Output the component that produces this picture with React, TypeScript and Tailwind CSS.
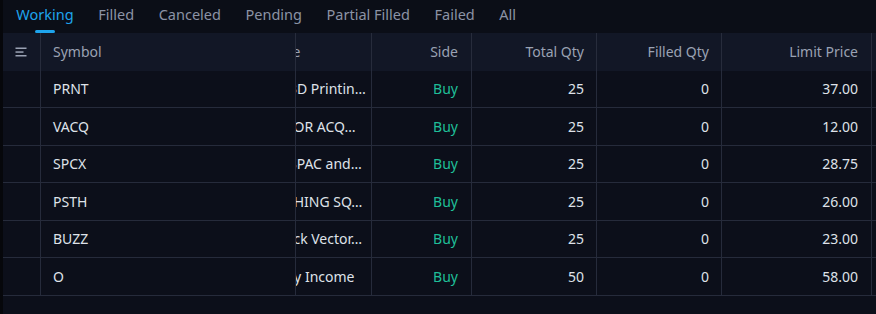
import React from "react";

const TABS = ["Working", "Filled", "Canceled", "Pending", "Partial Filled", "Failed", "All"];

// names are already cut the way the grid shows them
const ORDERS = [
  { symbol: "PRNT", name: "The 3D Printin…", side: "Buy", total: 25, filled: 0, price: "37.00" },
  { symbol: "VACQ", name: "VECTOR ACQ…", side: "Buy", total: 25, filled: 0, price: "12.00" },
  { symbol: "SPCX", name: "The SPAC and…", side: "Buy", total: 25, filled: 0, price: "28.75" },
  { symbol: "PSTH", name: "PERSHING SQ…", side: "Buy", total: 25, filled: 0, price: "26.00" },
  { symbol: "BUZZ", name: "VanEck Vector…", side: "Buy", total: 25, filled: 0, price: "23.00" },
  { symbol: "O", name: "Realty Income", side: "Buy", total: 50, filled: 0, price: "58.00" },
];

function ListIcon() {
  return (
    <svg width="12" height="10" viewBox="0 0 12 10" fill="none">
      <rect x="0.5" y="0.5" width="11" height="1.5" fill="#9aa2b3" />
      <rect x="0.5" y="4.3" width="8" height="1.5" fill="#9aa2b3" />
      <rect x="0.5" y="8" width="11" height="1.5" fill="#9aa2b3" />
    </svg>
  );
}

export default function App() {
  return (
    <div className="flex h-[314px] w-[876px] overflow-hidden bg-[#0c0f1a] font-['Noto_Sans',sans-serif] text-[14px]">
      <div className="w-[3px] shrink-0 bg-[#06070b]" />
      <div className="flex flex-1 flex-col overflow-hidden">
        {/* Tabs */}
        <div className="flex h-[33px] shrink-0 items-stretch bg-[#0b0e17] pl-px">
          {TABS.map((tab, i) => (
            <div key={tab} className="relative flex items-center px-[12.3px] pb-[4px] text-[14.5px]">
              <span className={i === 0 ? "text-[#1ea4ec]" : "text-[#8b93a5]"}>{tab}</span>
              {i === 0 && (
                <div className="absolute bottom-0 left-1/2 h-[3px] w-[20px] -translate-x-1/2 rounded-sm bg-[#1ea4ec]" />
              )}
            </div>
          ))}
        </div>

        {/* Header */}
        <div className="flex h-[37.5px] shrink-0 bg-[#121726] text-[#9aa2b3]">
          <div className="flex w-[38px] shrink-0 items-center justify-center border-r border-[#272c3c] pr-px">
            <ListIcon />
          </div>
          <div className="flex w-[255px] shrink-0 items-center border-r border-[#272c3c] pl-3">Symbol</div>
          <div className="flex w-[76px] shrink-0 items-center overflow-hidden border-r border-[#272c3c]">
            <div className="ml-[-47px] w-[123px] shrink-0 whitespace-nowrap pl-3">Name</div>
          </div>
          <div className="flex w-[100px] shrink-0 items-center justify-end border-r border-[#272c3c] pr-[13px]">Side</div>
          <div className="flex w-[125px] shrink-0 items-center justify-end border-r border-[#272c3c] pr-[12px]">Total Qty</div>
          <div className="flex w-[125px] shrink-0 items-center justify-end border-r border-[#272c3c] pr-[12px]">Filled Qty</div>
          <div className="flex w-[150px] shrink-0 items-center justify-end border-r border-[#272c3c] pr-[13px]">Limit Price</div>
          <div className="flex-1" />
        </div>

        {/* Rows */}
        {ORDERS.map(o => (
          <div key={o.symbol} className="flex h-[37.5px] shrink-0 border-b border-[#262b3b] text-[#dfe2e9]">
            <div className="w-[38px] shrink-0 border-r border-[#262b3b]" />
            <div className="flex w-[255px] shrink-0 items-center border-r border-[#262b3b] pl-3">{o.symbol}</div>
            <div className="flex w-[76px] shrink-0 items-center overflow-hidden border-r border-[#262b3b]">
              <div className="ml-[-47px] w-[123px] shrink-0 whitespace-nowrap pl-3">{o.name}</div>
            </div>
            <div className="flex w-[100px] shrink-0 items-center justify-end border-r border-[#262b3b] pr-[13px] text-[#1fbf98]">{o.side}</div>
            <div className="flex w-[125px] shrink-0 items-center justify-end border-r border-[#262b3b] pr-[12px]">{o.total}</div>
            <div className="flex w-[125px] shrink-0 items-center justify-end border-r border-[#262b3b] pr-[12px]">{o.filled}</div>
            <div className="flex w-[150px] shrink-0 items-center justify-end border-r border-[#262b3b] pr-[13px]">{o.price}</div>
            <div className="flex-1" />
          </div>
        ))}
      </div>
    </div>
  );
}
